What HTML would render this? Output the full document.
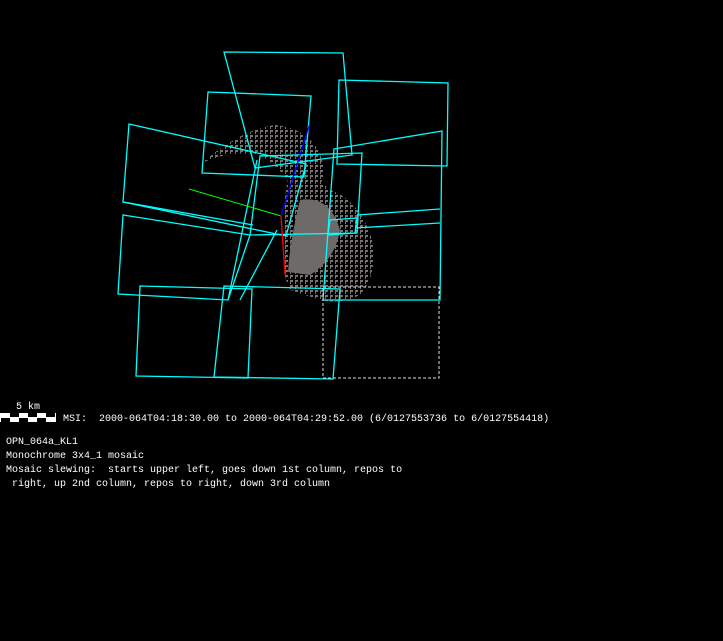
<!DOCTYPE html>
<html><head><style>
body{margin:0;background:#000;width:723px;height:641px;overflow:hidden;position:relative}
svg{position:absolute;left:0;top:0}
.t{position:absolute;color:#fff;font-family:"Liberation Mono",monospace;font-size:10px;line-height:14px;white-space:pre}
</style></head><body>
<svg width="723" height="641" viewBox="0 0 723 641">
<defs>
<pattern id="g" width="5" height="5" patternUnits="userSpaceOnUse">
<rect width="3" height="2" fill="#777270"/><rect width="1" height="4" fill="#777270"/>
</pattern>
</defs>
<path d="M202,163 Q240,130 275,125 Q305,128 318,150 Q328,170 320,185 L300,200 Q285,170 260,155 Q230,150 202,163Z" fill="url(#g)"/>
<path d="M290,170 Q315,175 330,190 Q360,200 372,240 Q378,275 360,295 Q340,305 320,300 L290,290 Q280,270 285,240 Q282,200 290,170Z" fill="url(#g)"/>
<path d="M300,200 Q330,195 340,230 Q335,260 310,275 L288,272 Q290,240 300,200Z" fill="#6e6a68"/>
<g fill="none" stroke="#00ffff" stroke-width="1.3">
<polygon points="224,52 343,53 352,155 255,168"/>
<polygon points="208,92 311,96 304,177 202,173"/>
<polygon points="339,80 448,83 447,166 337,164"/>
<polygon points="129,124 306,164 286,236 123,202"/>
<polygon points="123,215 250,235 228,300 118,294"/>
<polyline points="123,202 253,225"/>
<polygon points="260,156 362,153 357,233 250,235"/>
<polyline points="257,160 228,300"/>
<polyline points="277,230 240,300"/>
<polygon points="334,149 442,131 440,300 323,300"/>
<polyline points="357,215 440,209"/>
<polyline points="355,228 440,223"/>
<polygon points="330,220 357,218 355,233 328,235"/>
<polygon points="140,286 252,289 248,378 136,376"/>
<polygon points="224,286 340,289 333,379 214,377"/>
</g>
<polygon points="323,287 439,287 439,378 323,378" fill="none" stroke="#ddd" stroke-width="1" stroke-dasharray="3,2"/>
<line x1="189" y1="189" x2="281" y2="216" stroke="#00ff00" stroke-width="1"/>
<line x1="309" y1="126" x2="281" y2="216" stroke="#0000ff" stroke-width="1.3"/>
<polyline points="281,216 283,245 285,275" fill="none" stroke="#ff0000" stroke-width="1.3"/>
<rect x="0" y="413" width="56" height="9" fill="#fff"/>
<g fill="#000">
<rect x="10" y="413" width="9" height="4"/><rect x="28" y="413" width="9" height="4"/><rect x="46" y="413" width="9" height="4"/>
<rect x="1" y="418" width="9" height="4"/><rect x="19" y="418" width="9" height="4"/><rect x="37" y="418" width="9" height="4"/>
</g>
</svg>
<div class="t" style="left:16px;top:401px">5 km</div>
<div class="t" style="left:63px;top:413px">MSI:  2000-064T04:18:30.00 to 2000-064T04:29:52.00 (6/0127553736 to 6/0127554418)</div>
<div class="t" style="left:6px;top:436px">OPN_064a_KL1
Monochrome 3x4_1 mosaic
Mosaic slewing:  starts upper left, goes down 1st column, repos to
 right, up 2nd column, repos to right, down 3rd column</div>
</body></html>
